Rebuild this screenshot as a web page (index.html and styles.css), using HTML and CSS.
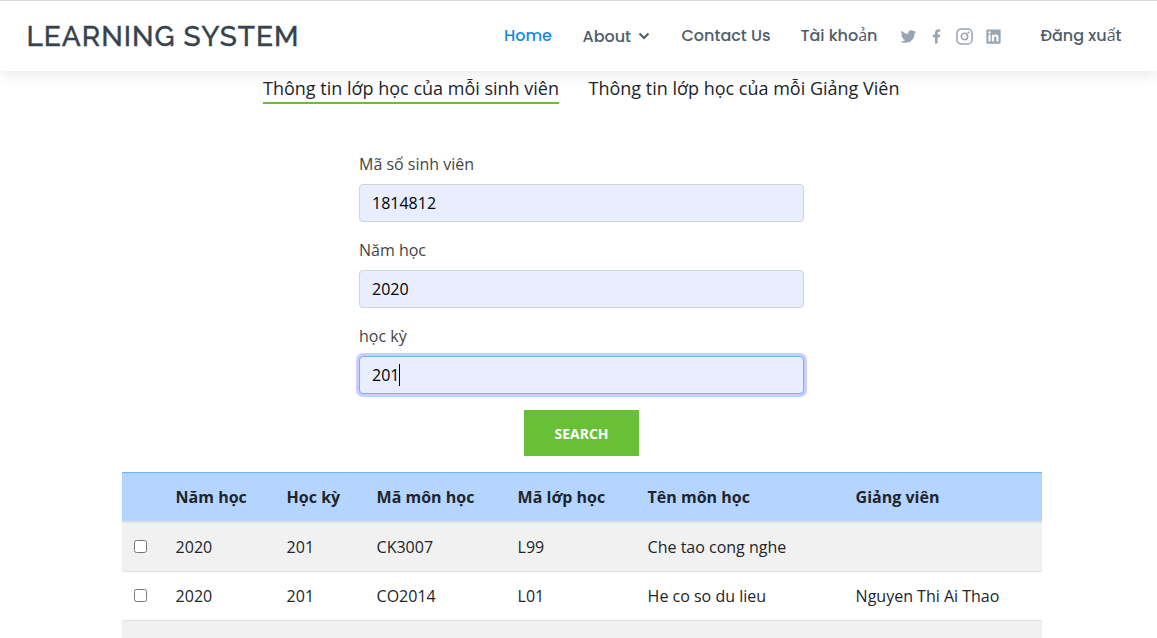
FILE: index.html
```html
<!DOCTYPE html>
<html lang="vi">
<head>
<meta charset="utf-8">
<title>Learning System</title>
<link rel="stylesheet" href="styles.css">
</head>
<body>
<header class="header">
  <h1 class="logo"><a>LEARNING SYSTEM</a></h1>
  <nav class="nav">
    <a class="nav-link home active">Home</a>
    <a class="nav-link about">About <svg class="chevron" viewBox="0 0 12 8"><path d="M1.500 1.500 6 6l4.500-4.500" fill="none" stroke="currentColor" stroke-width="2.100"/></svg></a>
    <a class="nav-link contact">Contact Us</a>
    <a class="nav-link account">Tài khoản</a>
    <div class="social">
      <svg viewBox="0 0 24 24"><path d="M19.633 7.997c.013.175.013.349.013.523 0 5.325-4.053 11.461-11.46 11.461-2.282 0-4.402-.661-6.186-1.809.324.037.636.05.973.05a8.07 8.07 0 0 0 5.001-1.721 4.036 4.036 0 0 1-3.767-2.793c.249.037.499.062.761.062.361 0 .724-.05 1.061-.137a4.027 4.027 0 0 1-3.230-3.953v-.05c.537.299 1.160.486 1.820.511a4.022 4.022 0 0 1-1.796-3.354c0-.748.199-1.434.548-2.032a11.457 11.457 0 0 0 8.306 4.215c-.062-.3-.1-.611-.1-.923a4.026 4.026 0 0 1 4.028-4.028c1.160 0 2.207.486 2.943 1.272a7.957 7.957 0 0 0 2.556-.973 4.020 4.020 0 0 1-1.771 2.220 8.073 8.073 0 0 0 2.319-.624 8.645 8.645 0 0 1-2.019 2.083z"/></svg>
      <svg viewBox="0 0 24 24"><path d="M13.397 20.997v-8.196h2.765l.411-3.209h-3.176V7.548c0-.926.258-1.560 1.587-1.560h1.684V3.127A22.336 22.336 0 0 0 14.201 3c-2.444 0-4.122 1.492-4.122 4.231v2.355H7.332v3.209h2.753v8.202h3.312z"/></svg>
      <svg viewBox="0 0 24 24"><rect x="2.500" y="2.500" width="19" height="19" rx="5.200" fill="none" stroke="currentColor" stroke-width="1.900"/><circle cx="12" cy="12" r="4" fill="none" stroke="currentColor" stroke-width="1.900"/><circle cx="17" cy="7" r="1.300"/></svg>
      <svg viewBox="0 0 24 24"><path d="M20 3H4a1 1 0 0 0-1 1v16a1 1 0 0 0 1 1h16a1 1 0 0 0 1-1V4a1 1 0 0 0-1-1zM8.339 18.337H5.667v-8.590h2.672v8.590zM7.003 8.574a1.548 1.548 0 1 1 0-3.096 1.548 1.548 0 0 1 0 3.096zm11.335 9.763h-2.669V14.160c0-.996-.018-2.277-1.388-2.277-1.390 0-1.601 1.086-1.601 2.207v4.248h-2.667v-8.590h2.560v1.174h.037c.355-.675 1.227-1.387 2.524-1.387 2.704 0 3.203 1.778 3.203 4.092v4.710z"/></svg>
    </div>
    <a class="nav-link logout">Đăng xuất</a>
  </nav>
</header>
<main>
  <div class="tabs">
    <a class="tab selected">Thông tin lớp học của mỗi sinh viên</a>
    <a class="tab">Thông tin lớp học của mỗi Giảng Viên</a>
  </div>
  <form class="form">
    <div class="field"><label>Mã số sinh viên</label><div class="input">1814812</div></div>
    <div class="field"><label>Năm học</label><div class="input">2020</div></div>
    <div class="field"><label>học kỳ</label><div class="input focused">201<span class="caret"></span></div></div>
    <button class="search" type="button">SEARCH</button>
  </form>
  <table class="table">
    <colgroup><col class="c-check"><col class="c-year"><col class="c-term"><col class="c-subject"><col class="c-class"><col class="c-name"><col class="c-teacher"></colgroup>
    <thead><tr><th></th><th>Năm học</th><th>Học kỳ</th><th>Mã môn học</th><th>Mã lớp học</th><th>Tên môn học</th><th>Giảng viên</th></tr></thead>
    <tbody>
      <tr><td><input type="checkbox"></td><td>2020</td><td>201</td><td>CK3007</td><td>L99</td><td>Che tao cong nghe</td><td></td></tr>
      <tr><td><input type="checkbox"></td><td>2020</td><td>201</td><td>CO2014</td><td>L01</td><td>He co so du lieu</td><td>Nguyen Thi Ai Thao</td></tr>
      <tr><td></td><td></td><td></td><td></td><td></td><td></td><td></td></tr>
    </tbody>
  </table>
</main>
</body>
</html>
```
FILE: styles.css
```css
* { box-sizing: border-box; }
html, body { height: 100%; overflow: hidden; }
body { margin: 0; background: #fff; color: #212529; font: 16px/24px "Open Sans", "Noto Sans", sans-serif; }
main { height: 567px; overflow: hidden; }
.header { height: 71px; border-top: 1px solid #d9d9df; display: flex; align-items: center; padding: 0 35.500px 0 26.500px; background: #fff; box-shadow: 0 2px 15px rgba(0,0,0,.1); }
.logo { margin: 0; padding-top: 2px; font: 500 28px/34px Raleway, Lato, sans-serif; letter-spacing: 1px; color: #36434d; -webkit-text-stroke: .4px #36434d; white-space: nowrap; }
.nav { display: flex; align-items: center; margin-left: auto; color: #4f5d69; font: 500 16px/24px Poppins, "Open Sans", sans-serif; white-space: nowrap; }
.nav-link { display: flex; align-items: center; margin-right: 30px; }
.home { width: 48.500px; }
.about { width: 69px; padding-top: 2px; }
.contact { width: 89px; }
.account { width: 77px; margin-right: 22px; }
.logout { width: 81px; margin-right: 0; }
.active { color: #128ddd; }
.chevron { width: 12px; height: 8px; margin: 0 2px 2px auto; }
.social { display: flex; gap: 9.200px; width: 103px; margin-left: -.5px; margin-right: 38.500px; padding-top: 1px; color: #98a5b0; }
.social svg { width: 19px; height: 19px; flex: none; fill: currentColor; }
.tabs { display: flex; justify-content: center; gap: 29.500px; padding: 4px 0 0 5.500px; font-size: 18px; line-height: 27px; white-space: nowrap; }
.tab { border-bottom: 2px solid transparent; }
.selected { border-color: #67c036; }
.form { width: 445px; margin: 48px auto 0 359px; }
.field { margin-bottom: 16px; }
label { display: block; color: #444; margin-bottom: 8px; }
.input { height: 38px; padding: 6px 12px; border: 1px solid #ced4da; border-radius: 4px; background: #e8eefe; color: #000; display: flex; align-items: center; }
.focused { border-color: #73affd; box-shadow: 0 0 0 3px #c8ceff; }
.caret { width: 1px; height: 22px; background: #000; }
.search { display: block; width: 115px; height: 46px; margin: 0 auto; padding: 2px 0 0; border: 0; background: #67c036; color: #fff; font: 700 14px/20px "Open Sans", sans-serif; }
.table { width: 920px; margin: 16px 0 0 122px; table-layout: fixed; border-collapse: separate; border-spacing: 0; }
.c-check { width: 42px; } .c-year { width: 111px; } .c-term { width: 90px; } .c-subject { width: 141px; } .c-class { width: 130px; } .c-name { width: 208px; } .c-teacher { width: 198px; }
th, td { padding: 12px 11.600px; text-align: left; white-space: nowrap; }
th { height: 51px; background: #b4d5ff; border-top: 1px solid #73affd; border-bottom: 2px solid #dee2e6; }
td { height: 49px; border-bottom: 1px solid #dee2e6; }
tbody tr:nth-child(odd) { background: #f1f1f1; }
td input { display: block; width: 13px; height: 13px; margin: 0 0 2px; }
```
